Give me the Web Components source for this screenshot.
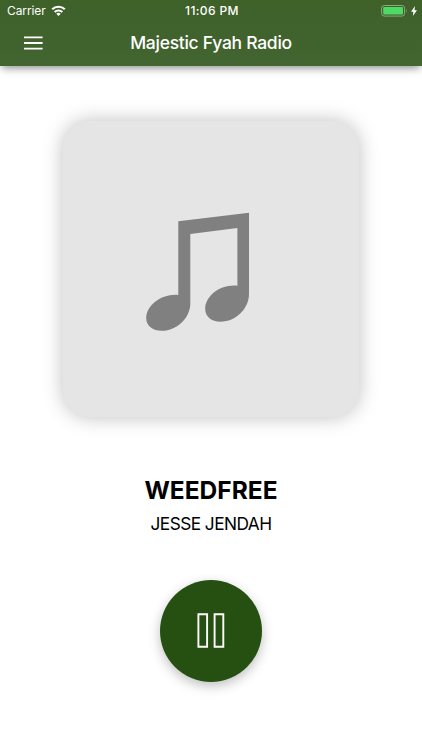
<!DOCTYPE html>
<html lang="en">
<head>
<meta charset="utf-8">
<meta name="viewport" content="width=device-width, initial-scale=1">
<title>Majestic Fyah Radio</title>
<style>
  html, body { height: 100%; }
  body {
    margin: 0;
    overflow: hidden;
    background: #fff;
    color: #000;
    font-family: Inter, "Liberation Sans", sans-serif;
  }
</style>
</head>
<body>
<radio-app>
  <app-header slot="header">
    <status-bar slot="status" carrier="Carrier" time="11:06 PM"></status-bar>
    Majestic Fyah Radio
  </app-header>
  <album-cover></album-cover>
  <track-info>
    <span slot="title">WEEDFREE</span>
    <span slot="artist">JESSE JENDAH</span>
  </track-info>
  <play-button></play-button>
</radio-app>

<script>
(() => {
  class RadioApp extends HTMLElement {
    constructor() {
      super();
      this.attachShadow({ mode: "open" });
      this.shadowRoot.innerHTML = `
        <style>
          :host {
            display: flex;
            flex-direction: column;
            height: 750px;
          }
          main {
            display: flex;
            flex-direction: column;
            align-items: center;
            padding-top: 55.5px;
          }
        </style>
        <slot name="header"></slot>
        <main><slot></slot></main>
      `;
    }
  }

  class AppHeader extends HTMLElement {
    constructor() {
      super();
      this.attachShadow({ mode: "open" });
      this.shadowRoot.innerHTML = `
        <style>
          :host {
            display: block;
            height: 65.5px;
            color: #fff;
            background: linear-gradient(#3e6029, #426531);
            box-shadow: 0 4px 8px -2px rgba(0, 0, 0, 0.45);
          }
          .bar {
            display: grid;
            grid-template-columns: 66px 1fr 66px;
            align-items: center;
            height: 42px;
          }
          button {
            display: flex;
            justify-content: center;
            padding: 0;
            border: 0;
            background: none;
            color: inherit;
          }
          h1 {
            margin: 0;
            text-align: center;
            white-space: nowrap;
            font-size: 17.5px;
            line-height: 22px;
            font-weight: 500;
            letter-spacing: -0.28px;
          }
        </style>
        <slot name="status"></slot>
        <div class="bar">
          <button aria-label="Menu">
            <svg width="20" height="16" viewBox="0 0 20 16" stroke="currentColor" stroke-width="1.8">
              <path d="M1 2.4h18.6M1 8h18.6M1 13.6h18.6" />
            </svg>
          </button>
          <h1><slot></slot></h1>
        </div>
      `;
    }
  }

  class StatusBar extends HTMLElement {
    constructor() {
      super();
      this.attachShadow({ mode: "open" });
      this.shadowRoot.innerHTML = `
        <style>
          :host {
            display: grid;
            grid-template-columns: 1fr auto 1fr;
            align-items: center;
            box-sizing: border-box;
            height: 22px;
            padding: 0 5px 0 7px;
            font-size: 12px;
            line-height: 22px;
          }
          .left, .right { display: flex; align-items: center; }
          .left { gap: 5px; }
          .carrier { letter-spacing: -0.1px; }
          .right { justify-content: flex-end; gap: 3px; }
          .time {
            font-weight: 500;
            letter-spacing: 0.4px;
          }
          svg { display: block; }
        </style>
        <div class="left">
          <span class="carrier"></span>
          <svg width="15" height="12" viewBox="0 0 15 12" fill="none" stroke="#fff" stroke-width="2.1">
            <path d="M1.2 4.3a8.9 8.9 0 0 1 12.6 0" />
            <path d="M3.7 7a5.4 5.4 0 0 1 7.6 0" />
            <path d="M7.5 11L5.3 8.8a3.2 3.2 0 0 1 4.4 0z" fill="#fff" stroke="none" />
          </svg>
        </div>
        <span class="time"></span>
        <div class="right">
          <svg width="27" height="12" viewBox="0 0 27 12">
            <rect x=".6" y=".5" width="23" height="10.6" rx="2.7" fill="none" stroke="#91a684" />
            <rect x="2.2" y="2.1" width="19.8" height="7.4" rx="1.1" fill="#4cd964" />
            <path d="M25.1 3.9q1.6 1.9 0 3.8z" fill="#91a684" />
          </svg>
          <svg width="6" height="10" viewBox="0 0 6 10">
            <path d="M4 0L0 5.7h2.4L1.8 10 6 4.2H3.5z" fill="#fff" />
          </svg>
        </div>
      `;
    }

    connectedCallback() {
      this.shadowRoot.querySelector(".carrier").textContent = this.getAttribute("carrier");
      this.shadowRoot.querySelector(".time").textContent = this.getAttribute("time");
    }
  }

  class AlbumCover extends HTMLElement {
    constructor() {
      super();
      this.attachShadow({ mode: "open" });
      this.shadowRoot.innerHTML = `
        <style>
          :host {
            display: block;
            width: 296px;
            height: 296px;
            border-radius: 27px;
            background: #e5e5e5;
            box-shadow: 0 0 20px rgba(0, 0, 0, 0.26);
          }
          svg { display: block; }
        </style>
        <svg width="296" height="296" viewBox="0 0 296 296" fill="#808080">
          <path d="M115.3 100.3L186 91.7V173C186 187.5 173 200.7 157.5 200.7C148.5 200.7 142.2 195.6 142.2 188C142.2 175.5 156.5 163 174.4 164.7V106.9L127.3 113V182.5C127.3 196.8 114 209.8 99 209.8C89.5 209.8 83.2 204.6 83.2 197.2C83.2 184.6 98 172.5 115.3 173.9Z" />
        </svg>
      `;
    }
  }

  class TrackInfo extends HTMLElement {
    constructor() {
      super();
      this.attachShadow({ mode: "open" });
      this.shadowRoot.innerHTML = `
        <style>
          :host {
            display: block;
            margin-top: 57px;
            text-align: center;
            white-space: nowrap;
          }
          h2, p { margin: 0; }
          h2 {
            font-size: 24.5px;
            line-height: 32px;
            font-weight: 700;
            letter-spacing: 0;
          }
          p {
            margin-top: 6px;
            font-size: 17.3px;
            line-height: 24px;
            letter-spacing: -0.55px;
          }
        </style>
        <h2><slot name="title"></slot></h2>
        <p><slot name="artist"></slot></p>
      `;
    }
  }

  class PlayButton extends HTMLElement {
    constructor() {
      super();
      this.attachShadow({ mode: "open" });
      this.shadowRoot.innerHTML = `
        <style>
          :host {
            display: block;
            margin-top: 43.5px;
          }
          button {
            display: flex;
            align-items: center;
            justify-content: center;
            width: 102px;
            height: 102px;
            padding: 0;
            border: 0;
            border-radius: 50%;
            background: #265012;
            box-shadow: 0 4px 12px rgba(0, 0, 0, 0.25);
          }
        </style>
        <button aria-label="Pause">
          <svg width="28" height="36" viewBox="0 0 28 36" fill="none" stroke="#fff" stroke-width="1.9">
            <path d="M1.4 1.2h8.7v32.6h-8.7zM17.6 1.2h8.7v32.6h-8.7z" />
          </svg>
        </button>
      `;
    }
  }

  customElements.define("radio-app", RadioApp);
  customElements.define("app-header", AppHeader);
  customElements.define("status-bar", StatusBar);
  customElements.define("album-cover", AlbumCover);
  customElements.define("track-info", TrackInfo);
  customElements.define("play-button", PlayButton);
})();
</script>
</body>
</html>
